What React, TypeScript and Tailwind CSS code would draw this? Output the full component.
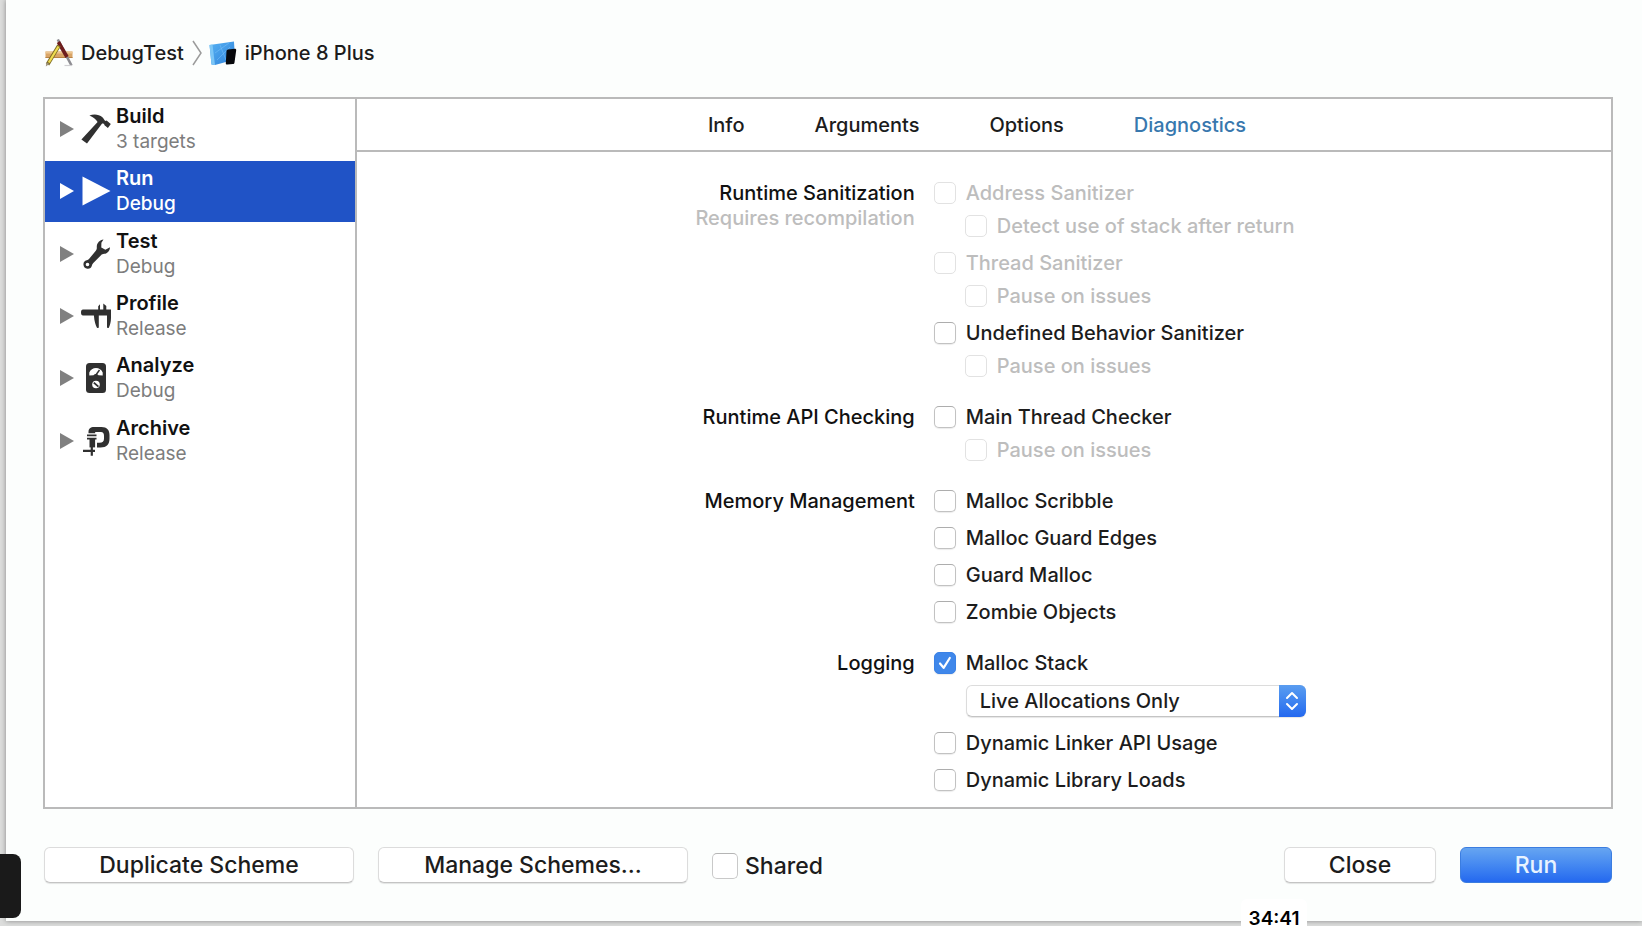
import { useState } from "react";
import type { ReactNode } from "react";

type Action = { name: string; detail: string; icon: ReactNode };

function HammerIcon() {
  return (
    <svg viewBox="0 0 30 30" className="size-[30px]" fill="currentColor" aria-hidden="true">
      <path d="M8.4 1.600C12.500-.2 18 .2 21.400 3.200c1.400 1.300 1.700 2.700 3 3.700l1.200-.3 4.200 3.500-2.900 3.900-3.400-2.700c0-1.300-1.200-1.900-2.400-1.700L6 29.500.4 25.400 16.600 8c-1.700-3-4.600-4.700-8.200-6.400z" />
    </svg>
  );
}

function PlayIcon() {
  return (
    <svg viewBox="0 0 30 30" className="size-[30px]" fill="currentColor" aria-hidden="true">
      <path d="M1.500.5 29.500 15 1.500 29.500z" />
    </svg>
  );
}

function WrenchIcon() {
  return (
    <svg viewBox="0 0 30 30" className="size-[30px]" fill="currentColor" aria-hidden="true">
      <path
        fillRule="evenodd"
        d="M22.500.6c-3.800.3-7 3.800-6.700 7.800.1 1.600-.3 2.500-1.200 3.600L8.200 19.800c-.7.800-1.400 1.200-2.500 1.500A4.300 4.300 0 1 0 10.900 26.600c.2-1 .6-1.800 1.400-2.600L20 16.200c.9-.9 1.800-1.300 3.200-1.400 3.300-.3 5.700-3 5.800-6.600l-4.600 2.500-4.100-2.300.1-4.600zM6.500 23.700a1.800 1.800 0 1 1 0 3.600 1.800 1.800 0 0 1 0-3.600z"
      />
    </svg>
  );
}

function CaliperIcon() {
  return (
    <svg viewBox="0 0 30 30" className="size-[30px]" fill="currentColor" aria-hidden="true">
      <path d="M2 8.500h15.200V5.200L19 3.200v5.300h3.300V2.600l3 2.400v3.500H30v8.200c0 4-.9 7.500-2.300 10.300L26 26.800V14.500h-8.200v12.300l-1.700.2c-1.500-2.500-2.700-6.500-3.200-12.500H2c-1.300 0-2-1.300-2-3s.7-3 2-3z" />
    </svg>
  );
}

function MeterIcon() {
  return (
    <svg viewBox="0 0 30 30" className="size-[30px]" aria-hidden="true">
      <rect x="5" y="0" width="20" height="30" rx="3.500" fill="currentColor" />
      <path d="M8.300 12.500V9.500C9.500 6.500 12 5 15 5s5.500 1.500 6.700 4.500v3l-4.200-.3a3.200 3.200 0 0 0-5 0z" fill="#fff" />
      <path d="M14.500 12.500 18.500 7" stroke="currentColor" strokeWidth="1.400" />
      <circle cx="15" cy="21.500" r="3.800" fill="#fff" />
      <path d="m12.800 19.600 4.600 4" stroke="currentColor" strokeWidth="1.800" />
    </svg>
  );
}

function ClampIcon() {
  return (
    <svg viewBox="0 0 30 30" className="size-[30px]" aria-hidden="true">
      <path
        d="M7.500 7.200V6c0-3.500 2-5 5.500-5h7.500c5.500 0 8 3 8 8v3.500c0 6-3 9-9 9H16v-4.700h2.500c3 0 4.500-1.300 4.500-4V9.800C23 7.300 22 6 20 6h-5.800v1.200z"
        fill="currentColor"
      />
      <path d="M6 9.400h9.500M6 12.600h9.500" stroke="currentColor" strokeWidth="1.700" />
      <path d="M2 24.800h12M10.800 20v9.700" stroke="currentColor" strokeWidth="2.200" />
      <path d="M11.300 12.600v8.800" stroke="currentColor" strokeWidth="5.600" />
    </svg>
  );
}

function AppIcon() {
  return (
    <svg viewBox="0 0 28 28" className="size-7" aria-hidden="true">
      <path d="M.5 12.500h27v6.500H.5z" fill="#d9a566" />
      <path d="M.5 12.500h27v2H.5z" fill="#ecc692" />
      <path d="M.5 18h27v1H.5z" fill="#b98245" />
      <path d="M12.800.5 26.500 26.500" stroke="#8d8d92" strokeWidth="2.600" />
      <path d="M13.400 3 22 18" stroke="#6e1d1d" strokeWidth="3.600" />
      <path d="M14 6.500 2.500 25.500" stroke="#7c6a24" strokeWidth="4" />
      <path d="M13.500 7.500 3.800 23.500" stroke="#f0dc50" strokeWidth="2.300" />
      <path d="m.8 27.500.6-4.300 3 1.800z" fill="#a0967f" />
      <path d="M19.500 26.500h7.500" stroke="#cfcfd2" strokeWidth="1.200" />
    </svg>
  );
}

function SimulatorIcon() {
  return (
    <svg viewBox="0 0 28 28" className="size-7" aria-hidden="true">
      <defs>
        <linearGradient id="screen" x1="0" y1="0" x2="1" y2="1">
          <stop offset="0" stopColor="#55b2f4" />
          <stop offset="1" stopColor="#2f80d8" />
        </linearGradient>
      </defs>
      <path d="M.5 6 25 2.500l1 18L6 26l-3.500-.5z" fill="url(#screen)" />
      <path d="M.5 6 2.500 25.500 6 26 3.500 5.600z" fill="#7cc6f6" />
      <path d="m6 14 14-10M8 21 21 8M11 6l6 15" stroke="#7dc3f8" strokeWidth=".5" />
      <path d="m19 10.500 6.800-.8c1 0 1.500.5 1.400 1.500L25.500 23.500c-.2 1-.7 1.500-1.600 1.600l-5.700.4c-1 0-1.500-.5-1.400-1.500L17.500 12c.1-.9.600-1.400 1.500-1.500z" fill="#07080c" />
    </svg>
  );
}

const actions: Action[] = [
  { name: "Build", detail: "3 targets", icon: <HammerIcon /> },
  { name: "Run", detail: "Debug", icon: <PlayIcon /> },
  { name: "Test", detail: "Debug", icon: <WrenchIcon /> },
  { name: "Profile", detail: "Release", icon: <CaliperIcon /> },
  { name: "Analyze", detail: "Debug", icon: <MeterIcon /> },
  { name: "Archive", detail: "Release", icon: <ClampIcon /> },
];

const tabs = ["Info", "Arguments", "Options", "Diagnostics"];

function Check({
  label,
  nested = false,
  disabled = false,
  first = false,
  defaultChecked = false,
}: {
  label: string;
  nested?: boolean;
  disabled?: boolean;
  first?: boolean;
  defaultChecked?: boolean;
}) {
  return (
    <label
      className={`flex h-6 w-fit items-center gap-2.5 whitespace-nowrap ${nested ? "ml-[31px] mt-[9px]" : first ? "" : "mt-[13px]"} ${
        disabled ? "text-[#bdbdbd]" : "text-[#1c1c1c]"
      }`}
    >
      <span className="relative flex size-[22px]">
        <input
          type="checkbox"
          disabled={disabled}
          defaultChecked={defaultChecked}
          className="peer size-[22px] appearance-none rounded-[5px] border border-[#c2c2c2] border-t-[#adadad] bg-white shadow-[0_1px_1px_rgba(0,0,0,0.08)] checked:border-[#3b82e6] checked:bg-[#3f87ea] disabled:border-[#e2e2e2] disabled:shadow-none"
        />
        <svg viewBox="0 0 22 22" className="pointer-events-none absolute inset-0 hidden peer-checked:block" fill="none" aria-hidden="true">
          <path d="m6 11.500 3.600 4.300L15.800 6" stroke="#fff" strokeWidth="2.200" strokeLinecap="round" strokeLinejoin="round" />
        </svg>
      </span>
      {label}
    </label>
  );
}

function Section({ title, note, children }: { title: string; note?: string; children: ReactNode }) {
  return (
    <section className="grid grid-cols-[14fr_17fr] gap-x-[19px]">
      <div className="text-right">
        <h2 className={`leading-6 text-[#111] ${note ? "font-medium" : ""}`}>{title}</h2>
        {note && <p className="leading-[26px] text-[#bdbdbd]">{note}</p>}
      </div>
      <div>{children}</div>
    </section>
  );
}

function PushButton({ children, wide = false, primary = false }: { children: ReactNode; wide?: boolean; primary?: boolean }) {
  return (
    <button
      type="button"
      className={`h-9 rounded-md border text-[23px] leading-8 ${wide ? "w-[310px]" : "w-[152px]"} ${
        primary
          ? "border-[#3b7de0] bg-linear-to-b from-[#66a5f1] to-[#2468ef] text-[#e8f3ff]"
          : "border-[#dcdcdc] border-b-[#c4c4c4] bg-white text-[#1c1c1c] shadow-[0_1px_1px_rgba(0,0,0,0.1)]"
      }`}
    >
      {children}
    </button>
  );
}

export default function App() {
  const [selected, setSelected] = useState("Run");
  const [tab, setTab] = useState("Diagnostics");

  return (
    <div className="relative flex min-h-screen overflow-hidden bg-[#dcdddc] pb-[5px] pl-1.5 font-[Inter,sans-serif] text-xl font-[450]">
      <main className="flex flex-1 flex-col bg-[#fcfefd] pl-[37px] pr-[29px] shadow-[0_0_5px_rgba(0,0,0,0.4)]">
        <nav aria-label="Scheme" className="flex h-[97px] items-center pl-0.5 pt-[9px] font-medium text-[#1c1c1c]">
          <AppIcon />
          <span className="ml-2">DebugTest</span>
          <svg viewBox="0 0 10 26" className="ml-2 h-[26px] w-2.5" fill="none" aria-hidden="true">
            <path d="m1 1 8 12-8 12" stroke="#9b9b9b" strokeWidth="1.500" />
          </svg>
          <span className="ml-[7px]">
            <SimulatorIcon />
          </span>
          <span className="ml-2">iPhone 8 Plus</span>
        </nav>

        <div className="flex h-[712px] border-2 border-[#bababa] bg-white">
          <aside className="w-[312px] shrink-0 border-r-2 border-[#bababa]">
            <ul className="grid h-[374px] auto-rows-fr">
              {actions.map(({ name, detail, icon }) => {
                const active = name === selected;
                return (
                  <li key={name} className="pb-0.5">
                    <button
                      type="button"
                      aria-pressed={active}
                      onClick={() => setSelected(name)}
                      className={`flex h-full w-full items-center pl-[15px] text-left ${active ? "bg-[#2053c6] text-white" : "text-[#303030]"}`}
                    >
                      <svg
                        viewBox="0 0 14 16"
                        className={`h-4 w-3.5 ${active ? "text-white" : "text-[#808080]"}`}
                        fill="currentColor"
                        aria-hidden="true"
                      >
                        <path d="M0 0 14 8 0 16z" />
                      </svg>
                      <span className="ml-[7px]">{icon}</span>
                      <span className="ml-[5px] flex flex-col leading-[26px]">
                        <span className={`font-semibold ${active ? "text-white" : "text-[#111]"}`}>{name}</span>
                        <span className={`text-[19px] ${active ? "font-medium text-white" : "font-normal text-[#7d7d7d]"}`}>{detail}</span>
                      </span>
                    </button>
                  </li>
                );
              })}
            </ul>
          </aside>

          <div className="flex min-w-0 flex-1 flex-col">
            <div role="tablist" className="flex h-[53px] shrink-0 items-center justify-center gap-[70px] border-b-2 border-[#bababa] pr-3.5">
              {tabs.map((name) => (
                <button
                  key={name}
                  type="button"
                  role="tab"
                  aria-selected={name === tab}
                  onClick={() => setTab(name)}
                  className={name === tab ? "text-[#3878ae]" : "text-[#1c1c1c]"}
                >
                  {name}
                </button>
              ))}
            </div>

            <form className="flex flex-col gap-[27px] pt-[29px]">
              <Section title="Runtime Sanitization" note="Requires recompilation">
                <Check label="Address Sanitizer" disabled first />
                <Check label="Detect use of stack after return" disabled nested />
                <Check label="Thread Sanitizer" disabled />
                <Check label="Pause on issues" disabled nested />
                <Check label="Undefined Behavior Sanitizer" />
                <Check label="Pause on issues" disabled nested />
              </Section>
              <Section title="Runtime API Checking">
                <Check label="Main Thread Checker" first />
                <Check label="Pause on issues" disabled nested />
              </Section>
              <Section title="Memory Management">
                <Check label="Malloc Scribble" first />
                <Check label="Malloc Guard Edges" />
                <Check label="Guard Malloc" />
                <Check label="Zombie Objects" />
              </Section>
              <Section title="Logging">
                <Check label="Malloc Stack" defaultChecked first />
                <div className="relative mb-3.5 ml-8 mt-2.5 flex w-[340px]">
                  <select
                    aria-label="Malloc stack mode"
                    className="h-8 w-full appearance-none rounded-md border border-[#dcdcdc] border-b-[#c4c4c4] bg-white pl-[13px] text-[#1c1c1c] shadow-[0_1px_1px_rgba(0,0,0,0.1)]"
                  >
                    <option>Live Allocations Only</option>
                    <option>All Allocation and Free History</option>
                  </select>
                  <span className="pointer-events-none absolute inset-y-0 right-0 flex w-[27px] items-center justify-center rounded-r-md bg-linear-to-b from-[#5a9df0] to-[#2468ef]">
                    <svg viewBox="0 0 14 20" className="h-5 w-3.5" fill="none" stroke="#fff" strokeWidth="2" strokeLinecap="round" strokeLinejoin="round" aria-hidden="true">
                      <path d="m2 7 5-5 5 5M2 13l5 5 5-5" />
                    </svg>
                  </span>
                </div>
                <Check label="Dynamic Linker API Usage" first />
                <Check label="Dynamic Library Loads" />
              </Section>
            </form>
          </div>
        </div>

        <footer className="flex items-center gap-6 px-px pt-[38px]">
          <PushButton wide>Duplicate Scheme</PushButton>
          <PushButton wide>Manage Schemes...</PushButton>
          <label className="flex items-center gap-[7px] pt-0.5 text-[23px] leading-8 text-[#1c1c1c]">
            <input
              type="checkbox"
              className="size-[26px] appearance-none rounded-[5px] border border-[#c9c9c9] border-t-[#b5b5b5] bg-white checked:bg-[#3f87ea]"
            />
            Shared
          </label>
          <div className="ml-auto flex gap-6">
            <PushButton>Close</PushButton>
            <PushButton primary>Run</PushButton>
          </div>
        </footer>
      </main>

      <div className="absolute bottom-2 left-0 h-16 w-[21px] rounded-r-lg bg-[#1a1a1a]" />
      <div className="absolute -bottom-1.5 right-[335px] flex h-[33px] w-[66px] items-center justify-center rounded-t-md bg-white pt-1.5 text-[19px] font-semibold leading-6 text-black">
        34:41
      </div>
    </div>
  );
}
